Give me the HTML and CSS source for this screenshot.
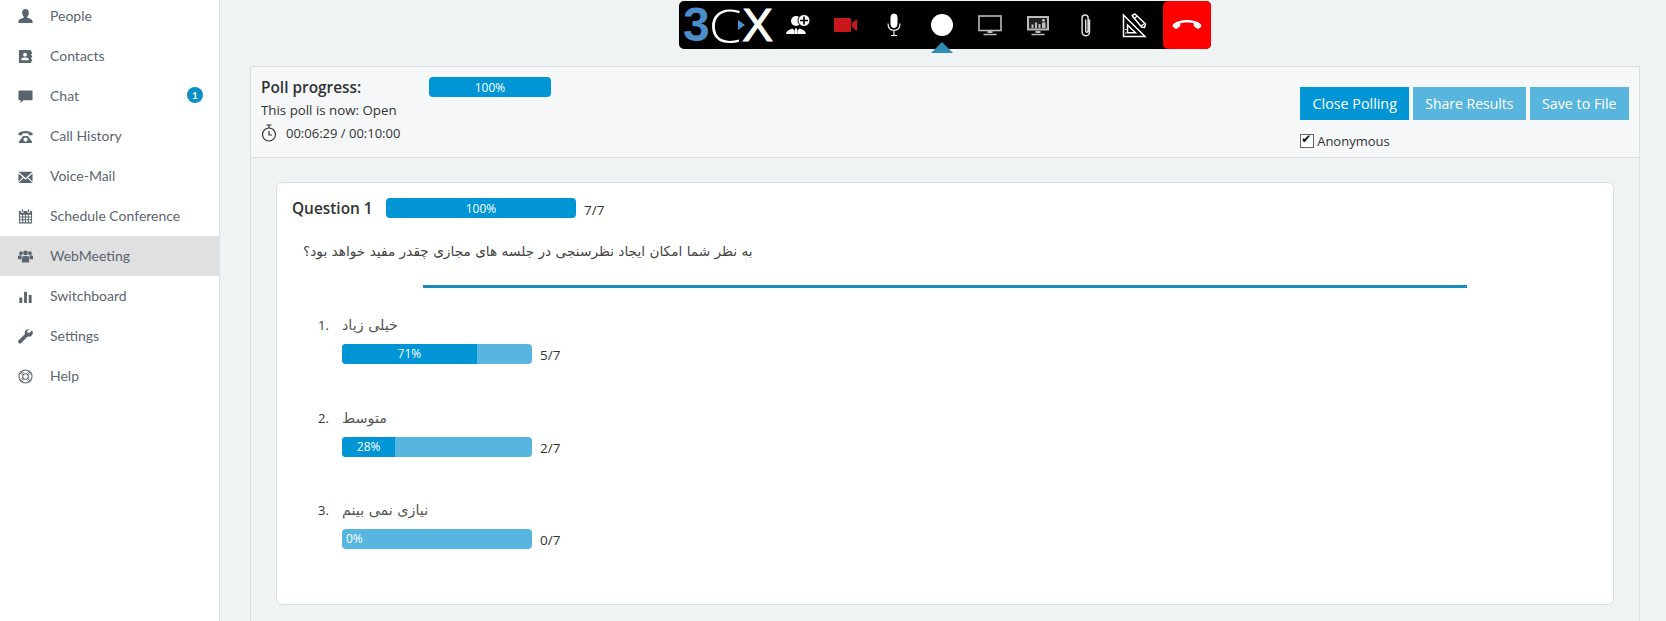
FILE: index.html
```html
<!DOCTYPE html>
<html lang="en">
<head>
  <meta charset="UTF-8" />
  <title>WebMeeting Poll</title>
  <link rel="stylesheet" href="styles.css">
</head>
<body>
  <div class="app">

    <!-- Sidebar -->
    <nav class="sidebar">
      <a class="nav-item"><svg class="nav-icon" viewBox="0 0 16 16"><path d="M8 0c2.300 0 3.600 1.700 3.600 4 0 1.700-.7 3.200-1.700 4.100v1.300c1.900.7 5.300 1.500 5.600 3.600V15H.5v-2c.3-2.100 3.700-2.900 5.600-3.600V8.100C5.100 7.200 4.400 5.700 4.400 4 4.400 1.700 5.700 0 8 0z"/></svg>People</a>
      <a class="nav-item"><svg class="nav-icon" viewBox="0 0 16 16"><path fill-rule="evenodd" d="M1 1h12a1 1 0 0 1 1 1v1h1v2h-1v2h1v2h-1v2h1v2h-1v1a1 1 0 0 1-1 1H1zm6.500 3a2 2 0 0 0-2 2.200c0 1 .8 1.900 2 1.900s2-.9 2-1.900a2 2 0 0 0-2-2.200zM3.500 12h8v-1.300c0-1-1.500-1.700-4-1.700s-4 .7-4 1.700z"/></svg>Contacts</a>
      <a class="nav-item"><svg class="nav-icon" viewBox="0 0 16 16"><path d="M1.500 1.500h13a1 1 0 0 1 1 1v8.500a1 1 0 0 1-1 1H6l-3.500 3 .5-3H1.500a1 1 0 0 1-1-1V2.500a1 1 0 0 1 1-1z"/></svg>Chat<span class="nav-badge">1</span></a>
      <a class="nav-item"><svg class="nav-icon" viewBox="0 0 16 16"><path fill-rule="evenodd" d="M8 2c3.500 0 6.500 1 7.500 2.500v2.200h-4V5c-2-.6-5-.6-7 0v1.700h-4V4.500C1.500 3 4.500 2 8 2zM5.500 7.500h5l4.500 6V15H1v-1.500zM8 9a2.300 2.300 0 1 0 0 4.600A2.300 2.300 0 0 0 8 9z"/></svg>Call History</a>
      <a class="nav-item"><svg class="nav-icon" viewBox="0 0 16 16"><path d="M.5 3h15L8 9.500zM.5 4.800l4.500 4-4.500 4.700zM15.500 4.800v8.700L11 8.800zM6 9.700l2 1.800 2-1.800 5.500 5.300H.5z"/></svg>Voice-Mail</a>
      <a class="nav-item"><svg class="nav-icon" viewBox="0 0 16 16"><path fill-rule="evenodd" d="M4 .5h1.500V3H4zM10.500.5H12V3h-1.500zM1 2h2v2h3V2h4v2h3V2h2v13.500H1zm1 4v2h2.500V6zm3.500 0v2h2V6zm3 0v2h2V6zm3 0v2H14V6zM2 9v2h2.500V9zm3.500 0v2h2V9zm3 0v2h2V9zm3 0v2H14V9zM2 12v2h2.500v-2zm3.500 0v2h2v-2zm3 0v2h2v-2zm3 0v2H14v-2z"/></svg>Schedule Conference</a>
      <a class="nav-item nav-item-active"><svg class="nav-icon" viewBox="0 0 16 16"><circle cx="3.300" cy="4.500" r="2"/><circle cx="12.700" cy="4.500" r="2"/><circle cx="8" cy="4.200" r="2.500"/><path d="M0 7.500c.5-.6 1.500-.8 3.500-.8L4 11H0zM16 7.500c-.5-.6-1.500-.8-3.500-.8L12 11h4zM4.500 8c1-.8 6-.8 7 0l.5 6.500H4z"/></svg>WebMeeting</a>
      <a class="nav-item"><svg class="nav-icon" viewBox="0 0 16 16"><path d="M1.500 9h3v6h-3zM6.500 3h3v12h-3zM11.500 6.500h3V15h-3z"/></svg>Switchboard</a>
      <a class="nav-item"><svg class="nav-icon" viewBox="0 0 16 16"><path d="M14.800 1.500l-2.800 2.700-1.900-.5-.3-1.800L12.400.5C10.500-.2 8.300.6 7.500 2.500c-.4 1-.4 2 0 2.900L.7 12c-.8.700-.8 2 0 2.800.8.800 2 .8 2.800 0l6.700-6.700c2.800 1 5.800-1.100 5.600-4.300 0-.8-.3-1.600-1-2.300z"/></svg>Settings</a>
      <a class="nav-item"><svg class="nav-icon nav-icon-line" viewBox="0 0 16 16"><circle cx="8" cy="8" r="7"/><circle cx="8" cy="8" r="3"/><path d="M5.900 5.900L3 3M10.100 5.900L13 3M5.900 10.100L3 13M10.100 10.100L13 13M4.400 6.300L2 3.900M6.300 4.400L3.900 2M9.700 4.400L12.100 2M11.600 6.300L14 3.900M4.400 9.700L2 12.100M6.300 11.600L3.900 14M9.700 11.600L12.100 14M11.600 9.700L14 12.100" stroke-width=".8"/></svg>Help</a>
    </nav>

    <main class="content">

      <!-- Call toolbar -->
      <div class="toolbar">
        <div class="logo"><span class="logo-3">3</span><span class="logo-c">C</span><span class="logo-x">X</span><span class="logo-play"></span></div>
        <button class="tool"><svg width="26" height="24" viewBox="0 0 26 24" fill="#fff"><circle cx="11" cy="8" r="5"/><path d="M1 21c.5-3.500 4-4.500 6.500-5.500l2 2v3.500zM21 21c-.5-3.500-4-4.500-6.500-5.500l-2 2v3.500z"/><path d="M10 15.500h2l.5 5.500h-3z"/><circle cx="19" cy="7.500" r="6" stroke="#000" stroke-width="1"/><path d="M18.200 3.500h1.600v3.200H23v1.600h-3.200v3.200h-1.600V8.300H15V6.700h3.200z" fill="#000"/></svg></button>
        <button class="tool"><svg width="24" height="16" viewBox="0 0 24 16" fill="#c8181b"><rect x="0" y="1" width="17" height="14" rx="1"/><path d="M18 6l5-4v12l-5-4z"/></svg></button>
        <button class="tool"><svg width="16" height="24" viewBox="0 0 16 24" fill="none" stroke="#fff"><rect x="5" y="1" width="6" height="13.500" rx="3" fill="#fff"/><path d="M2 10.500c0 4.500 2.500 6.800 6 6.800s6-2.300 6-6.800M8 17.500v4.500M5 22.500h6" stroke-width="1.100"/></svg></button>
        <button class="tool"><span class="record-dot"></span></button>
        <button class="tool"><svg width="24" height="21" viewBox="0 0 24 21" fill="none" stroke="#bbb"><rect x="1" y="1" width="22" height="14.500" stroke-width="1.600"/><path d="M9.500 16h5v2h-5zM5.500 18.800h13v1.400h-13z" fill="#bbb" stroke="none"/></svg></button>
        <button class="tool"><svg width="24" height="21" viewBox="0 0 24 21"><path fill="#bbb" d="M1 1h22v14.500H1z"/><path fill="#222" d="M3 3h18v10.500H3z"/><path fill="#bbb" d="M5.500 9.500h2V13h-2zM9 7.500h2V13H9zM12.500 9h2v4h-2zM17.500 3.800a1.500 1.500 0 1 1 0 3 1.500 1.500 0 0 1 0-3zM16 7.500h3.500V13H16z"/><path fill="#bbb" d="M9.500 16h5v2h-5zM5.500 18.800h13v1.400h-13z"/></svg></button>
        <button class="tool"><svg width="14" height="25" viewBox="0 0 14 25" fill="none" stroke="#ddd" stroke-width="1.500" stroke-linecap="round"><path d="M10.500 7v12a3.700 3.700 0 0 1-7.400 0V5a3 3 0 0 1 6 0v13a1.200 1.200 0 0 1-2.400 0V7"/></svg></button>
        <button class="tool"><svg width="25" height="25" viewBox="0 0 25 25" fill="none" stroke="#fff" stroke-width="1.500"><path d="M1.500 2v21.500H23z"/><path d="M5.500 12v7.800h8z"/><path d="M4.500 16.500H3M4.500 20H3" stroke-width="1"/><path d="M10 2.500l3-1.500 10.500 10-1 3.500-3-.5z" fill="#000" stroke-linejoin="round"/><path d="M12 6l3-3M22 11l-3 2" stroke-width="1.200"/></svg></button>
        <button class="hangup"><svg width="30" height="14" viewBox="0 0 30 14" fill="#fff"><path d="M1 8.500C6 2.500 24 2.500 29 8.500c.7 1 .5 2-.3 2.700l-1.700 1.300c-.8.500-1.500.5-2.200 0l-2.500-2c-.6-.5-.6-1-.6-1.700V7.300C18.500 6.200 11.500 6.200 8.300 7.300v1.500c0 .7 0 1.200-.6 1.700l-2.500 2c-.7.500-1.400.5-2.200 0l-1.700-1.300C.5 10.500.3 9.500 1 8.500z"/></svg></button>
        <span class="record-caret"></span>
      </div>

      <section class="poll">
        <header class="poll-head">
          <div class="poll-info">
            <div class="poll-progress">
              <strong class="poll-title">Poll progress:</strong>
              <div class="bar bar-head"><div class="bar-fill" style="width:100%">100%</div></div>
            </div>
            <p class="poll-line">This poll is now: Open</p>
            <p class="poll-line poll-timer"><svg width="16" height="18" viewBox="0 0 16 18" fill="none" stroke="#333" stroke-width="1.200"><circle cx="8" cy="10.500" r="6.500"/><path d="M5.500 1h5M8 1v3M8 7v4h3"/></svg>00:06:29 / 00:10:00</p>
          </div>
          <div class="poll-actions">
            <div class="poll-buttons">
              <button class="btn btn-wide">Close Polling</button>
              <button class="btn btn-light">Share Results</button>
              <button class="btn btn-light btn-wide">Save to File</button>
            </div>
            <label class="anon"><input type="checkbox" checked>Anonymous</label>
          </div>
        </header>

        <div class="poll-body">
          <article class="card">
            <div class="question-head">
              <strong class="question-title">Question 1</strong>
              <div class="bar"><div class="bar-fill" style="width:100%">100%</div></div>
              <span class="count">7/7</span>
            </div>
            <p class="question-text"><span dir="rtl" lang="fa">به نظر شما امکان ایجاد نظرسنجی در جلسه های مجازی چقدر مفید خواهد بود؟</span></p>
            <hr class="divider">

            <ol class="options">
              <li class="option">
                <div class="option-label"><span class="option-num">1.</span><span dir="rtl" lang="fa">خیلی زیاد</span></div>
                <div class="option-result">
                  <div class="bar"><div class="bar-fill" style="width:71%">71%</div></div>
                  <span class="count">5/7</span>
                </div>
              </li>
              <li class="option">
                <div class="option-label"><span class="option-num">2.</span><span dir="rtl" lang="fa">متوسط</span></div>
                <div class="option-result">
                  <div class="bar"><div class="bar-fill" style="width:28%">28%</div></div>
                  <span class="count">2/7</span>
                </div>
              </li>
              <li class="option">
                <div class="option-label"><span class="option-num">3.</span><span dir="rtl" lang="fa">نیازی نمی بینم</span></div>
                <div class="option-result">
                  <div class="bar"><div class="bar-fill bar-fill-empty">0%</div></div>
                  <span class="count">0/7</span>
                </div>
              </li>
            </ol>
          </article>
        </div>
      </section>

    </main>
  </div>
</body>
</html>
```

FILE: styles.css
```css
/* RESET & GLOBAL */
* { margin:0; padding:0; box-sizing:border-box; }
html, body {
  height:100%; overflow:hidden;
  font-family:"Open Sans", "DejaVu Sans", sans-serif;
  font-size:13px; background:#eff3f4; color:#333;
}
.app { display:flex; height:100%; }

/* SIDEBAR */
.sidebar {
  width:220px; flex:none; background:#fff;
  border-right:1px solid #dde2e5;
}
.nav-item {
  display:flex; align-items:center; height:40px;
  padding:0 16px 2px 18px; color:#5b6670;
  font-family:"Lato", sans-serif; font-size:14px;
}
.nav-item:first-child { margin-top:-4px; }
.nav-item-active { background:#e0e0e0; }
.nav-icon {
  width:15px; height:15px; margin:2px 17px 0 0; flex:none; fill:#59646e;
}
.nav-icon-line { fill:none; stroke:#59646e; stroke-width:1.100; }
.nav-badge {
  margin-left:auto; width:16px; height:16px; border-radius:50%;
  background:#0a8fc6; color:#fff; font-size:10px; font-weight:700;
  display:flex; align-items:center; justify-content:center;
}

/* CONTENT */
.content {
  flex:1; min-width:0; display:flex; flex-direction:column;
  padding:1px 26px 0 30px;
}

/* TOOLBAR */
.toolbar {
  position:relative; display:flex; align-self:center;
  width:532px; height:48px; margin-bottom:17px;
  background:#000; border-radius:5px;
}
.logo {
  position:relative; width:95px; flex:none; padding-left:4px;
  display:flex; align-items:center; height:48px; color:#fff;
  font-family:"Liberation Sans", sans-serif; font-size:48px; line-height:48px;
}
.logo-3 { color:#4a8fc9; font-weight:700; }
.logo-c {
  display:inline-block; margin:0 2.500px 0 1.500px; transform:scaleX(1.150);
  font-family:"Open Sans", sans-serif; font-weight:300; font-size:46px;
}
.logo-x { -webkit-text-stroke:1px #fff; font-size:46px; }
.logo-play {
  position:absolute; left:59px; top:19px; width:0; height:0;
  border-top:5px solid transparent; border-bottom:5px solid transparent;
  border-left:7px solid #4a8fc9;
}
.tool {
  width:48px; height:48px; flex:none; background:none; border:none;
  display:flex; align-items:center; justify-content:center;
}
.record-dot { width:22px; height:22px; border-radius:50%; background:#fff; }
.record-caret {
  position:absolute; left:252px; top:41px; width:0; height:0;
  border-left:11px solid transparent; border-right:11px solid transparent;
  border-bottom:11px solid #2f8db5;
}
.hangup {
  width:48px; height:48px; flex:none; margin-left:5px;
  background:#fe0000; border:none; border-radius:5px;
  display:flex; align-items:center; justify-content:center; padding-bottom:4px;
}

/* POLL */
.poll {
  flex:1; min-height:0; border:1px solid #d9dfe3; border-bottom:none;
}
.poll-head {
  display:flex; justify-content:space-between; height:91px;
  padding:10px 10px 0 10px; background:#f5f7f8; border-bottom:1px solid #d9dfe3;
}
.poll-progress { display:flex; align-items:center; height:20px; }
.poll-title { width:168px; font-size:15.400px; font-weight:600; color:#333; }
.poll-line { margin-top:3px; height:20px; line-height:20px; font-size:13.300px; }
.poll-timer { display:flex; align-items:center; gap:9px; font-size:13px; }
.poll-actions { padding-top:10px; }
.poll-buttons { display:flex; gap:4px; }
.btn {
  height:33px; padding:0 12px; border:none; background:#0096d6; color:#fff;
  font-family:inherit; font-size:14px;
}
.btn-light { background:#58b5de; }
.btn-wide { padding:0 12.400px; font-size:14.300px; }
.anon { display:flex; align-items:center; margin-top:11px; height:20px; }
.anon input {
  appearance:none; position:relative; width:14px; height:14px; margin-right:3px;
  background:#fff; border:1px solid #666;
}
.anon input::before {
  content:"✔"; position:absolute; left:0; top:-3px;
  font-family:"DejaVu Sans", sans-serif; font-size:12px; color:#111;
}

.poll-body { padding:24px 25px 0 25px; }

/* CARD */
.card {
  height:423px; padding:15px 15px 0 15px;
  background:#fff; border:1px solid #d9dfe3; border-radius:6px;
}
.question-head { display:flex; align-items:center; height:20px; }
.question-title { width:94px; font-size:15.400px; font-weight:600; }
.question-text {
  margin:23px 0 0 11px; height:20px; line-height:20px; color:#444;
  font-family:"DejaVu Sans", sans-serif; font-size:13.700px;
}
.divider {
  height:3px; border:none; background:#1a8dbd;
  margin:24px 131px 0 131px;
}

/* BARS */
.bar {
  position:relative; width:190px; height:20px; flex:none;
  background:#58b5e0; border-radius:4px; overflow:hidden;
}
.bar-head { width:122px; }
.bar-fill {
  height:100%; background:#0096d6; color:#fff; font-size:12px;
  display:flex; align-items:center; justify-content:center;
}
.bar-fill-empty {
  background:none; justify-content:flex-start; padding-left:4px;
}
.count { margin-left:8px; padding-top:3px; font-size:13.500px; }

/* OPTIONS */
.options { list-style:none; margin-top:26px; padding-left:26px; }
.option { height:92px; }
.option:first-child { height:93px; }
.option-label {
  display:flex; align-items:center; height:20px; margin-bottom:9px; padding-top:1px;
  font-family:"DejaVu Sans", sans-serif; font-size:14.300px; color:#555;
}
.option-num { width:24px; font-family:"Open Sans", sans-serif; font-size:13px; color:#333; }
.option-result { display:flex; align-items:center; margin-left:24px; }
```
